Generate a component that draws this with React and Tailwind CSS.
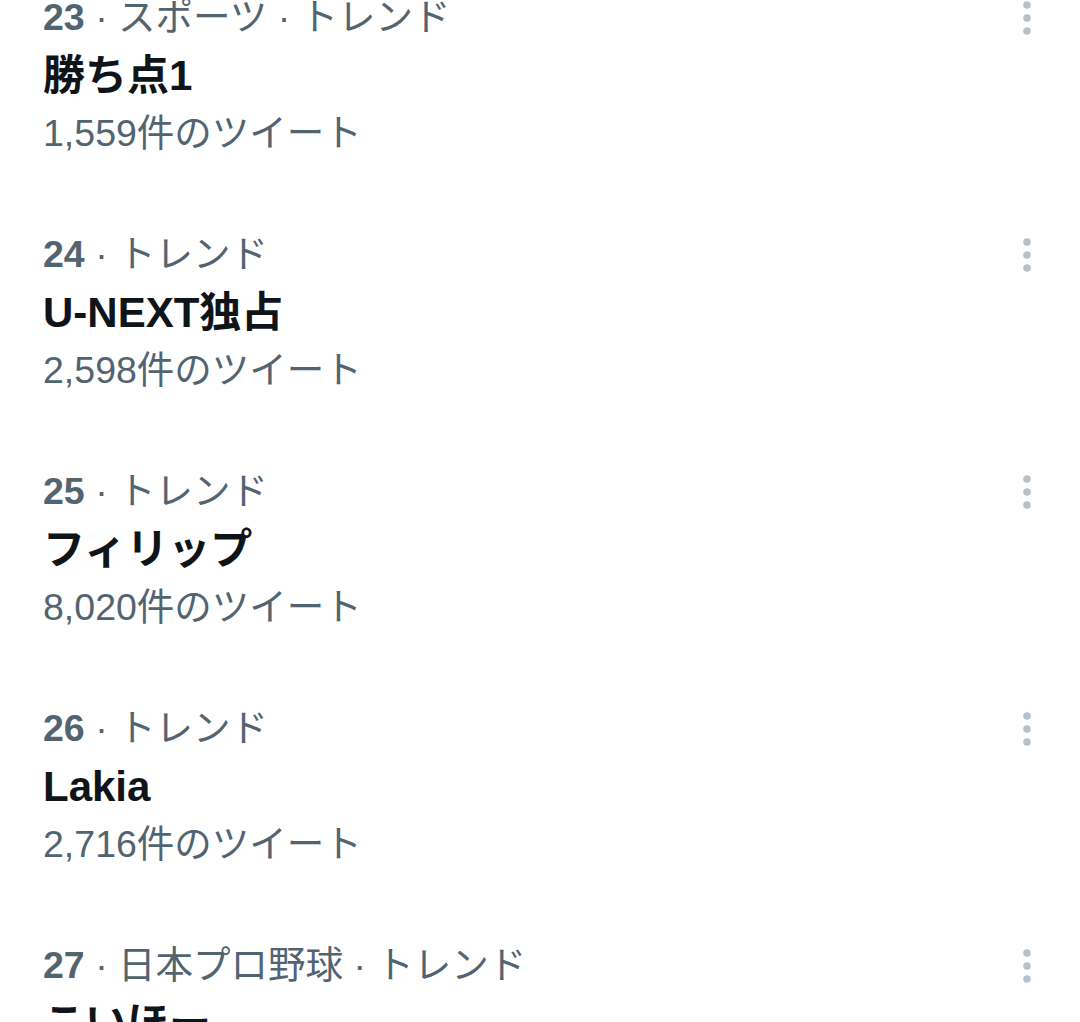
import React from "react";

const items = [
  { rank: "23", cat: "スポーツ · トレンド", title: "勝ち点1", count: "1,559件のツイート" },
  { rank: "24", cat: "トレンド", title: "U-NEXT独占", count: "2,598件のツイート" },
  { rank: "25", cat: "トレンド", title: "フィリップ", count: "8,020件のツイート" },
  { rank: "26", cat: "トレンド", title: "Lakia", count: "2,716件のツイート" },
  { rank: "27", cat: "日本プロ野球 · トレンド", title: "こいほー", count: "1,204件のツイート" },
];

function Dots() {
  return (
    <svg width="14" height="34" viewBox="0 0 14 34" className="block">
      <circle cx="7" cy="4" r="3.8" fill="#b7c1c9" />
      <circle cx="7" cy="17" r="3.8" fill="#b7c1c9" />
      <circle cx="7" cy="30" r="3.8" fill="#b7c1c9" />
    </svg>
  );
}

export default function App() {
  return (
    <div
      className="w-[1080px] h-[1022px] overflow-hidden bg-white"
      style={{ fontFamily: '"Liberation Sans", "Noto Sans CJK JP", sans-serif' }}
    >
      <div className="-mt-[44px]">
        {items.map((it) => (
          <div key={it.rank} className="flex h-[237px] pl-[43px] pr-[46px] pt-[32px]">
            <div className="flex-1 flex flex-col">
              <div className="h-[58px] flex items-center text-[37.5px] text-[#536471] whitespace-nowrap">
                <span className="font-bold">{it.rank}</span>
                <span>&nbsp;· {it.cat}</span>
              </div>
              <div className="h-[58px] flex items-center text-[42px] font-bold text-[#0f1419] whitespace-nowrap">
                {it.title}
              </div>
              <div className="h-[58px] flex items-center text-[37.5px] text-[#536471] whitespace-nowrap">
                {it.count}
              </div>
            </div>
            <div className="pt-[13px]">
              <Dots />
            </div>
          </div>
        ))}
      </div>
    </div>
  );
}
